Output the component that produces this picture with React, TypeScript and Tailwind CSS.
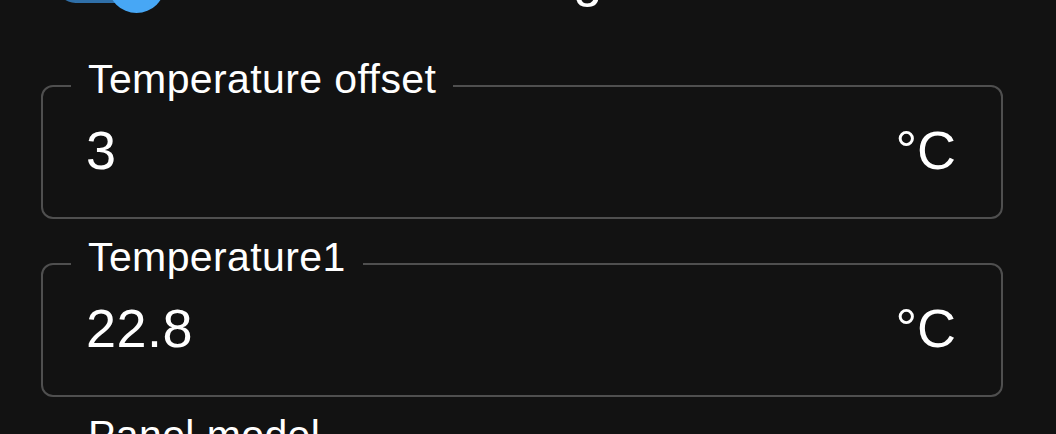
import React from 'react';

type FieldProps = {
  label: string;
  value: string;
  unit?: string;
};

const Field: React.FC<FieldProps> = ({ label, value, unit }) => {
  return (
    <div className="relative h-[134px] shrink-0 rounded-[12px] border-2 border-[#4f4f4f] flex items-start justify-between pl-[43px] pr-[45px] pt-[36px]">
      <span className="absolute -top-[28px] left-[28px] bg-[#121212] px-[17px] text-[41px] leading-[41px] tracking-[0.4px] whitespace-nowrap">
        {label}
      </span>
      <span className="text-[54px] leading-[54px] tracking-[0.5px]">{value}</span>
      {unit && <span className="text-[54px] leading-[54px]">{unit}</span>}
    </div>
  );
};

const App: React.FC = () => {
  return (
    <div className="h-screen overflow-hidden bg-[#121212] text-white font-['Liberation_Sans',Arial,sans-serif] flex flex-col pl-[41px] pr-[53px]">
      {/* switch row, mostly scrolled out of view */}
      <div className="-mt-[48px] h-[64px] shrink-0 flex items-center">
        <div className="relative ml-[16px] w-[110px] h-[57px] flex items-center">
          <div className="w-full h-[37px] rounded-full bg-[#2f6fa8]" />
          <div className="absolute right-[2px] top-0 w-[57px] h-[57px] rounded-full bg-[#47a7f5]" />
        </div>
        <span className="ml-[42px] pb-[12px] text-[52px] leading-[52px] whitespace-nowrap">
          Use floor heating
        </span>
      </div>

      <div className="mt-[69px] flex flex-col gap-[44px]">
        <Field label="Temperature offset" value="3" unit="°C" />
        <Field label="Temperature1" value="22.8" unit="°C" />
        <Field label="Panel model" value="Standard" />
      </div>
    </div>
  );
};

export default App;
